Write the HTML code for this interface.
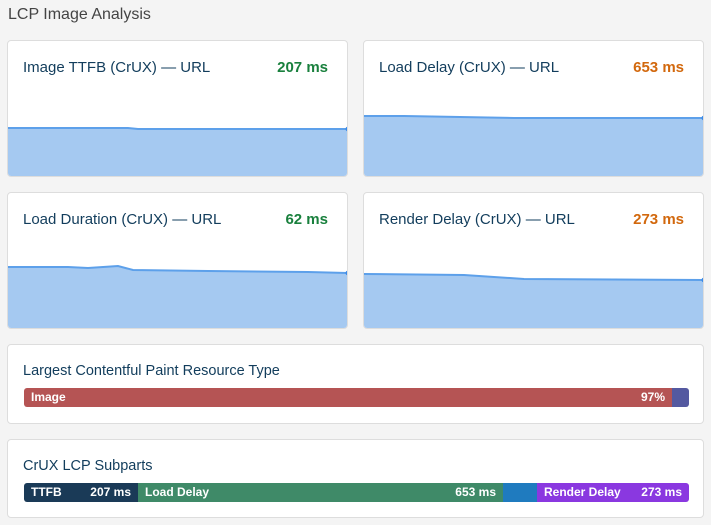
<!DOCTYPE html><html><head><style>
body{margin:0;width:711px;height:525px;background:#f4f4f4;font-family:"Liberation Sans",sans-serif;position:relative;overflow:hidden}
.h{position:absolute;left:8px;top:6px;font-size:16px;color:#444}
.c{position:absolute;background:#fff;border:1px solid #ddd;border-radius:4px;box-sizing:border-box;overflow:hidden}
.t{position:absolute;left:15px;top:18px;font-size:15px;color:#123d5c}
.v{position:absolute;right:19px;top:18px;font-size:15px;font-weight:bold}
.g{color:#19803d}.o{color:#d2680d}
svg{position:absolute;left:0;bottom:0}
.bar{position:absolute;left:16px;height:19px;border-radius:3px;overflow:hidden;display:flex;font-size:12px;font-weight:bold;color:#fff;line-height:19px}
.bar div{box-sizing:border-box;padding:0 7px;display:flex;justify-content:space-between;white-space:nowrap}
</style></head><body>
<div class="h">LCP Image Analysis</div>
<div class="c" style="left:7px;top:40px;width:341px;height:137px"><div class="t">Image TTFB (CrUX) — URL</div><div class="v g">207 ms</div>
<svg width="341" height="137" viewBox="0 0 341 137" style="top:0"><path d="M0 87 L120 87 L130 88 L341 88 L341 137 L0 137Z" fill="#a5c9f1"/><path d="M0 87 L120 87 L130 88 L341 88" stroke="#5da0ea" stroke-width="2" fill="none"/><circle cx="340" cy="88" r="2.5" fill="#3b8ae8"/></svg></div>
<div class="c" style="left:363px;top:40px;width:341px;height:137px"><div class="t">Load Delay (CrUX) — URL</div><div class="v o">653 ms</div>
<svg width="341" height="137" viewBox="0 0 341 137" style="top:0"><path d="M0 75 L40 75 L150 77 L341 77 L341 137 L0 137Z" fill="#a5c9f1"/><path d="M0 75 L40 75 L150 77 L341 77" stroke="#5da0ea" stroke-width="2" fill="none"/><circle cx="340" cy="77" r="2.5" fill="#3b8ae8"/></svg></div>
<div class="c" style="left:7px;top:192px;width:341px;height:137px"><div class="t">Load Duration (CrUX) — URL</div><div class="v g">62 ms</div>
<svg width="341" height="137" viewBox="0 0 341 137" style="top:0"><path d="M0 74 L60 74 L80 75 L110 73 L125 77 L200 78 L300 79 L341 80 L341 137 L0 137Z" fill="#a5c9f1"/><path d="M0 74 L60 74 L80 75 L110 73 L125 77 L200 78 L300 79 L341 80" stroke="#5da0ea" stroke-width="2" fill="none"/><circle cx="340" cy="80" r="2.5" fill="#3b8ae8"/></svg></div>
<div class="c" style="left:363px;top:192px;width:341px;height:137px"><div class="t">Render Delay (CrUX) — URL</div><div class="v o">273 ms</div>
<svg width="341" height="137" viewBox="0 0 341 137" style="top:0"><path d="M0 81 L100 82 L160 86 L341 87 L341 137 L0 137Z" fill="#a5c9f1"/><path d="M0 81 L100 82 L160 86 L341 87" stroke="#5da0ea" stroke-width="2" fill="none"/><circle cx="340" cy="87" r="2.5" fill="#3b8ae8"/></svg></div>
<div class="c" style="left:7px;top:344px;width:697px;height:80px"><div class="t" style="font-size:14.5px">Largest Contentful Paint Resource Type</div>
<div class="bar" style="top:43px;width:665px"><div style="width:648px;background:#b55454">Image<span>97%</span></div><div style="width:17px;background:#5459a0"></div></div></div>
<div class="c" style="left:7px;top:439px;width:697px;height:79px"><div class="t" style="font-size:14.5px">CrUX LCP Subparts</div>
<div class="bar" style="top:43px;width:665px"><div style="width:114px;background:#1a3a57">TTFB<span>207 ms</span></div><div style="width:365px;background:#3f8a68">Load Delay<span>653 ms</span></div><div style="width:34px;background:#1f7bbf"></div><div style="width:152px;background:#8a38e0">Render Delay<span>273 ms</span></div></div></div>
</body></html>
